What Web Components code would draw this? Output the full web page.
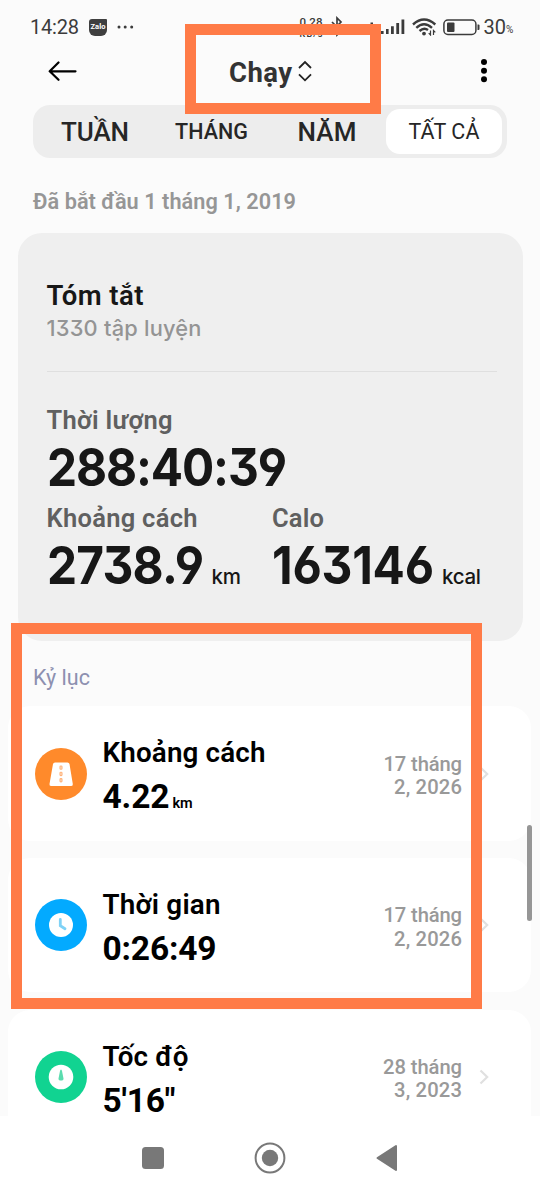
<!DOCTYPE html>
<html lang="vi">
<head>
<meta charset="utf-8">
<title>Chạy</title>
<style>
html,body{margin:0;padding:0;background:#fbfbfb}
body{font-family:Roboto,"Noto Sans",sans-serif;width:540px;height:1200px;overflow:hidden}
</style>
</head>
<body>
<workout-app></workout-app>
<script>
const define = (name, html, ready) => customElements.define(name, class extends HTMLElement {
  connectedCallback() {
    if (this.shadowRoot) return;
    const t = document.createElement('template');
    t.innerHTML = typeof html === 'function' ? html(this) : html;
    this.attachShadow({mode: 'open'}).appendChild(t.content.cloneNode(true));
    if (ready) ready(this);
  }
});

/* A line of text; "sx" condenses its glyphs, "fit" spreads its letters over a given width. */
define('ui-text', el => {
  const a = n => el.getAttribute(n);
  const num = el.hasAttribute('num');
  return `<style>
  :host{display:block;white-space:nowrap;font-size:${a('size')}px;line-height:${a('line') || 24}px;font-weight:${a('weight') || 400};color:${a('color') || 'inherit'};
  ${num ? 'font-family:Inter,Roboto,sans-serif;font-feature-settings:"cv03","cv04","cv09";' : ''}}
  span{display:inline-block;transform-origin:0 50%;transform:${a('sx') ? `scaleX(${a('sx')})` : 'none'}}
  </style><span><slot></slot></span>`;
}, el => {
  const fit = parseFloat(el.getAttribute('fit'));
  if (!fit) return;
  const sx = parseFloat(el.getAttribute('sx')) || 1;
  const span = el.shadowRoot.querySelector('span');
  const n = [...el.textContent].length;
  const gap = (fit - span.getBoundingClientRect().width) / sx / (n - 1);
  span.style.letterSpacing = gap.toFixed(3) + 'px';
  el.style.width = fit + 'px';
});

define('status-bar', `<style>
:host{display:flex;height:53px;box-sizing:border-box;padding:1px 26px 0 30px;align-items:center;justify-content:space-between;color:#3b3b3b}
div{display:flex;align-items:center}
svg{display:block;flex:none}
.z{width:18px;height:17px;margin:0 10px 0 10px;background:#3f3f3f;border-radius:3px 1px 6px 6px;color:#fff;display:flex;justify-content:center}
.net{margin-right:11px}
.pct{margin-top:5px}
</style>
<div><ui-text size="20" fit="49">14:28</ui-text><span class="z"><ui-text size="7.500" line="15" weight="700" fit="15">Zalo</ui-text></span>
<svg width="17" height="4" fill="#3b3b3b"><circle cx="2" cy="2" r="1.500"/><circle cx="8.200" cy="2" r="1.500"/><circle cx="14.700" cy="2" r="1.500"/></svg></div>
<div><div class="net"><span><ui-text size="11.500" line="13" weight="500" fit="23">0.28</ui-text><ui-text size="9" line="10" weight="600" fit="23">KB/s</ui-text></span></div>
<svg width="12" height="22" viewBox="0 0 12 22" fill="none" stroke="#3b3b3b" stroke-width="1.700" style="margin:0 16px 0 -3px"><path d="M1 6l9 9-4 4V2l4 4-9 9"/></svg>
<svg width="21" height="16" fill="#3b3b3b" style="margin-right:1px"><path d="M0 13h2.500v3H0zM4 10h2.500v6H4zM7 6h2.500v10H7zM11.500 3.500H14V16h-2.500z"/></svg>
<svg width="24" height="16" fill="#3b3b3b" style="margin-right:7px"><path d="M0 12h2.600v3H0zM5 10h2.600v5H5zM10 7.300h2.800V15H10zM15.300 4h2.800v11h-2.800zM20.500 .5h2.800V15h-2.800z"/></svg>
<svg width="25" height="18" viewBox="0 0 25 18" fill="none" stroke="#3b3b3b" stroke-width="2.400" style="margin-right:6px"><path d="M1 6.500Q12 -3.500 23.300 6.500M4.300 9.800Q12 2.800 20 9.800M7.500 13Q12 9 16 12"/><circle cx="12" cy="15.600" r="1.900" fill="#3b3b3b" stroke="none"/><path stroke-width="1.200" d="M18.500 12.500v4.500l-1.800-1.800M21.500 17v-4.500l1.800 1.800"/></svg>
<svg width="37" height="17" viewBox="0 0 37 17" style="margin-right:4px"><rect x=".9" y="1" width="32" height="14.500" rx="4" fill="none" stroke="#3b3b3b" stroke-width="1.500"/><rect x="4" y="3.500" width="7.500" height="9.500" rx="1" fill="#3b3b3b"/><path d="M34.500 5.500h1q1 0 1 1v3.500q0 1-1 1h-1z" fill="#3b3b3b"/></svg>
<ui-text size="20" fit="22.500">30</ui-text><span class="pct"><ui-text size="10" line="12" fit="8">%</ui-text></span></div>`);

define('app-header', `<style>
:host{display:flex;height:36px;align-items:center;padding:0 52px 0 48px}
.t{display:flex;align-items:center;gap:6px;padding-left:152px}
svg{display:block}.m{margin-left:auto}
</style>
<svg width="29" height="20" viewBox="0 0 29 20" fill="none" stroke="#000" stroke-width="2.200" stroke-linecap="round" stroke-linejoin="round"><path d="M10.500 1.500L1.700 10.300l8.800 8.500M2 10.300h25.500"/></svg>
<div class="t"><ui-text size="27.500" line="40" weight="700" color="#333" fit="63" style="padding-top:4px">Chạy</ui-text>
<svg width="14" height="22" viewBox="0 0 14 22" fill="none" stroke="#222" stroke-width="1.800"><path d="M1 8l6-6 6 6M1 14.300l6 6 6-6"/></svg></div>
<svg class="m" width="8" height="26" viewBox="0 0 8 26"><circle cx="4" cy="4" r="3"/><circle cx="4" cy="12.800" r="3"/><circle cx="4" cy="21.300" r="3"/></svg>`);

define('range-tabs', `<style>
:host{display:grid;grid-template-columns:124px 109px 122px 116px;height:53px;box-sizing:border-box;width:474px;margin:16px 0 0 33px;padding:4px 5px 4px 0;border-radius:17px;background:#ededed;color:#262626;align-items:center;justify-items:center}
ui-text{padding-top:1px}
.on{background:#fff;border-radius:14px;width:116px;height:45px;display:flex;align-items:center;justify-content:center;margin-left:-4px}
</style>
<ui-text size="26" weight="500" fit="68">TUẦN</ui-text><ui-text size="21.500" weight="500" fit="73">THÁNG</ui-text><ui-text size="26" weight="500" fit="59">NĂM</ui-text><span class="on"><ui-text size="21.500" weight="400" fit="71">TẤT CẢ</ui-text></span>`);

define('stat-block', el => `<style>
:host{display:block}
.v{display:flex;align-items:baseline;gap:9px;margin-top:${el.getAttribute('gap')}px}
</style><slot name="label"></slot><div class="v"><slot></slot></div>`);

define('summary-card', `<style>
:host{display:block;box-sizing:border-box;width:504.500px;height:408px;margin:19px 0 0 18px;padding:47.600px 26px 0 28.500px;background:#efefef;border-radius:24px;color:#171717}
hr{border:0;height:1px;background:#dfdfdf;margin:30px 0 32.600px}
.g{display:grid;grid-template-columns:225.500px 1fr;margin-top:5.200px}
</style>
<ui-text size="27.500" line="32" weight="600" fit="97">Tóm tắt</ui-text>
<ui-text num size="21.800" line="26" weight="500" color="#949494" fit="155" style="margin-top:3px">1330 tập luyện</ui-text>
<hr>
<stat-block gap="2.500"><ui-text slot="label" size="25.500" line="30" weight="600" color="#606060" fit="126">Thời lượng</ui-text>
<ui-text num size="52.500" line="60" weight="650" sx=".91" fit="240">288:40:39</ui-text></stat-block>
<div class="g" style="margin-top:6.200px">
<stat-block gap="1.300"><ui-text slot="label" size="25.500" line="30" weight="600" color="#606060" fit="151">Khoảng cách</ui-text>
<ui-text num size="52.500" line="60" weight="650" sx=".91" fit="157">2738.9</ui-text><ui-text num size="20.500" weight="500" fit="29.500" style="margin-left:-1px">km</ui-text></stat-block>
<stat-block gap="1.300"><ui-text slot="label" size="25.500" line="30" weight="600" color="#606060" fit="52">Calo</ui-text>
<ui-text num size="52.500" line="60" weight="650" sx=".91" fit="162">163146</ui-text><ui-text num size="20.500" weight="500" fit="39" style="margin-left:-1px">kcal</ui-text></stat-block>
</div>`);

define('record-card', `<style>
:host{display:flex;box-sizing:border-box;width:523px;height:134.200px;margin-left:8px;padding:0 42px 0 26.500px;border-radius:22px;background:#fff;align-items:center;color:#000}
.i{flex:none;width:52px;height:52px}
.c{flex:1;align-self:flex-start;padding:30.700px 0 0 16px}
.v{display:flex;align-items:baseline;gap:3px;margin-top:10px}
.d{padding-top:5px;display:flex;flex-direction:column;align-items:flex-end}
svg{display:block;margin-left:17px}
</style>
<span class="i"><slot name="icon"></slot></span>
<div class="c"><slot name="title"></slot><div class="v"><slot></slot></div></div>
<div class="d"><slot name="date"></slot></div>
<svg width="10" height="16" viewBox="0 0 10 16" fill="none" stroke="#e0e0e0" stroke-width="2.200"><path d="M1.500 1.500L8.200 8l-6.700 6.500"/></svg>`);

const glyphs = {
  road: ['#ff8a2b', '<path d="M20 14.500h12.500q1.600 0 2 1.600l3.300 20q.3 1.900-1.500 1.900H16q-1.800 0-1.500-1.900l3.500-20q.4-1.600 2-1.600z" fill="#fff"/><g fill="#ffe4cd" stroke="#ffb27a" stroke-width="1.100"><rect x="25" y="18" width="2" height="3.300" rx=".8"/><rect x="25" y="24.300" width="2" height="3.300" rx=".8"/><rect x="25" y="30.600" width="2" height="3.300" rx=".8"/></g>'],
  clock: ['#03aaff', '<circle cx="26" cy="26" r="12" fill="#fff"/><path d="M25.300 20.500v6.300l4.700 3" fill="none" stroke="#7fd2f6" stroke-width="2.800" stroke-linecap="round"/>'],
  gauge: ['#11d391', '<circle cx="26" cy="26" r="12.300" fill="#fff"/><path d="M26 18.500q.7 0 1 1.500l1.500 7.500q.2 2-2.500 2t-2.500-2l1.500-7.500q.3-1.500 1-1.500z" fill="#5bdcae"/>']
};
define('record-icon', el => {
  const [bg, art] = glyphs[el.getAttribute('kind')];
  return `<style>:host{display:block}svg{display:block}</style><svg width="52" height="52" viewBox="0 0 52 52"><circle cx="26" cy="26" r="26" fill="${bg}"/>${art}</svg>`;
});

define('nav-bar', `<style>
:host{display:flex;position:relative;height:84px;margin-top:-4px;background:#fff;align-items:center;justify-content:center;gap:89px}
svg{display:block}
</style>
<svg width="24" height="24" fill="#787878"><rect x="1" y="1" width="22" height="22" rx="3.500"/></svg>
<svg width="32" height="32" fill="#787878"><circle cx="16" cy="16" r="14.400" fill="none" stroke="#787878" stroke-width="2"/><circle cx="16" cy="16" r="8.200"/></svg>
<svg width="24" height="28" fill="#787878" stroke="#787878" stroke-width="2" stroke-linejoin="round"><path d="M2.500 14L21 2v24z"/></svg>`);

define('highlight-frame', `<style>:host{display:block;position:absolute;box-sizing:border-box;border:11px solid #ff7b47}</style>`);

define('workout-app', `<style>
:host{display:block;position:relative;width:540px;height:1200px;overflow:hidden;background:#fbfbfb}
main{height:1120px;overflow:hidden}
.since{display:block;margin:31.500px 0 0 33px}
.head{margin:25.600px 0 16.400px 33px}
.list{display:flex;flex-direction:column;gap:17.500px}
.bar{position:absolute;left:527px;top:825px;width:4.600px;height:95.500px;border-radius:2.500px;background:#969696}
.f1{left:185px;top:24px;width:196px;height:90px}
.f2{left:11px;top:622.500px;width:471px;height:386px}
</style>
<main>
<status-bar></status-bar>
<app-header></app-header>
<range-tabs></range-tabs>
<ui-text class="since" size="21.700" weight="600" color="#969696" fit="263">Đã bắt đầu 1 tháng 1, 2019</ui-text>
<summary-card></summary-card>
<ui-text class="head" size="21.500" color="#8d90b0" fit="57">Kỷ lục</ui-text>
<div class="list">
<record-card><record-icon slot="icon" kind="road"></record-icon><ui-text slot="title" size="27.800" line="32" weight="600" fit="163">Khoảng cách</ui-text>
<ui-text size="33.500" line="36" weight="700" fit="67">4.22</ui-text><ui-text size="14.500" line="16" weight="600" fit="20">km</ui-text>
<ui-text slot="date" size="20.200" line="23.300" weight="500" color="#999" fit="78.500">17 tháng</ui-text><ui-text slot="date" size="20.200" line="23.300" weight="500" color="#999" fit="68">2, 2026</ui-text></record-card>
<record-card><record-icon slot="icon" kind="clock"></record-icon><ui-text slot="title" size="27.800" line="32" weight="600" fit="118">Thời gian</ui-text>
<ui-text size="33.500" line="36" weight="700" fit="114">0:26:49</ui-text>
<ui-text slot="date" size="20.200" line="23.300" weight="500" color="#999" fit="78.500">17 tháng</ui-text><ui-text slot="date" size="20.200" line="23.300" weight="500" color="#999" fit="68">2, 2026</ui-text></record-card>
<record-card><record-icon slot="icon" kind="gauge"></record-icon><ui-text slot="title" size="27.800" line="32" weight="600" fit="86">Tốc độ</ui-text>
<ui-text size="33.500" line="36" weight="700" fit="73">5'16"</ui-text>
<ui-text slot="date" size="20.200" line="23.300" weight="500" color="#999" fit="79">28 tháng</ui-text><ui-text slot="date" size="20.200" line="23.300" weight="500" color="#999" fit="68">3, 2023</ui-text></record-card>
</div>
</main>
<nav-bar></nav-bar>
<span class="bar"></span>
<highlight-frame class="f1"></highlight-frame>
<highlight-frame class="f2"></highlight-frame>`);
</script>
</body>
</html>
